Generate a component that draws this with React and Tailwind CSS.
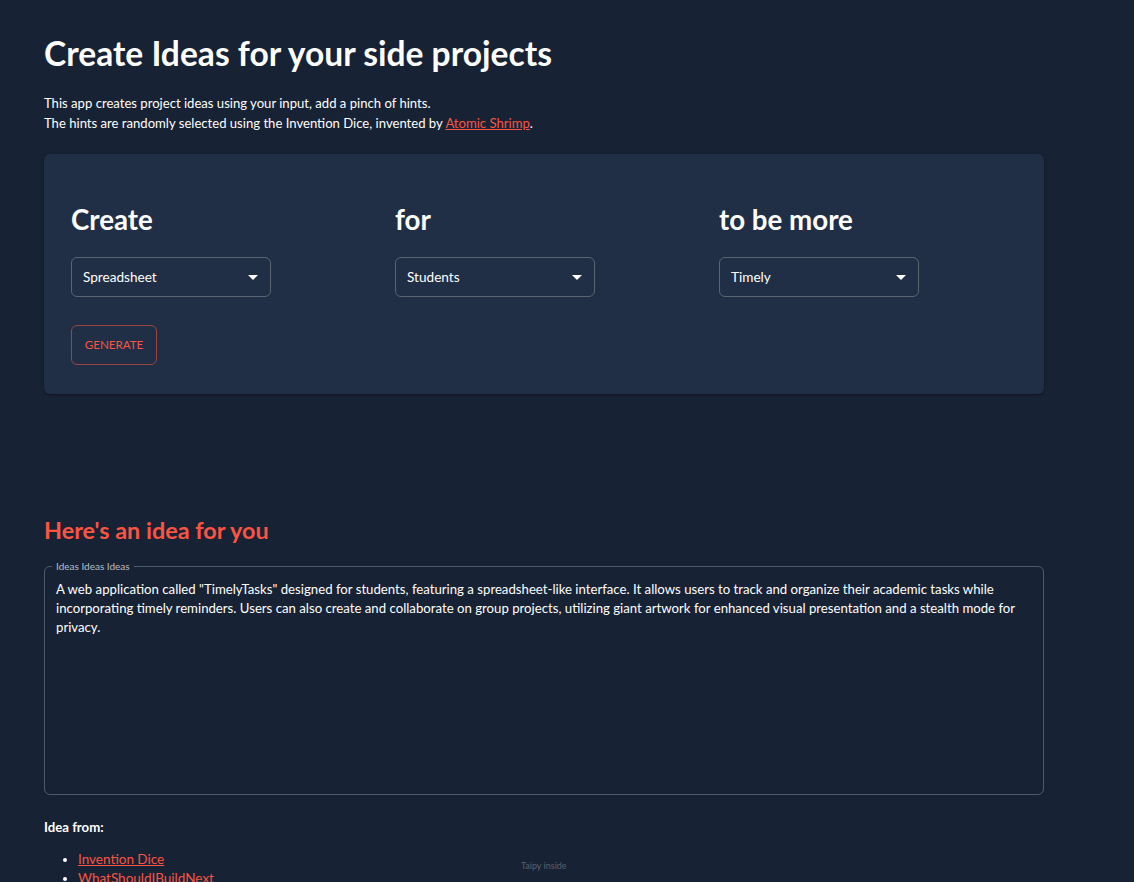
import React from "react";

const Select = ({ value }) => (
  <div className="flex items-center justify-between w-[200px] h-[40px] px-[11px] border border-[#5b6473] rounded-[6px] text-[13.6px] text-white">
    <span>{value}</span>
    <svg width="10" height="5" viewBox="0 0 10 5" className="mr-[1px]">
      <path d="M0 0 L10 0 L5 5 Z" fill="#ffffff" />
    </svg>
  </div>
);

const Column = ({ title, value }) => (
  <div>
    <h2 className="text-[27.7px] font-bold leading-[32px] text-white">{title}</h2>
    <div className="mt-[21px]">
      <Select value={value} />
    </div>
  </div>
);

export default function App() {
  return (
    <div
      className="min-h-screen bg-[#172235] text-white"
      style={{ fontFamily: "Lato, 'Open Sans', sans-serif" }}
    >
      <div className="w-[1000px] ml-[44px] pt-[32px] relative">
        <h1 className="text-[33.6px] font-bold leading-[42px]">
          Create Ideas for your side projects
        </h1>
        <p className="mt-[19px] text-[13.1px] leading-[20px]">
          This app creates project ideas using your input, add a pinch of hints.
          <br />
          The hints are randomly selected using the Invention Dice, invented by{" "}
          <a href="#" className="text-[#fb5442] underline">
            Atomic Shrimp
          </a>
          .
        </p>

        <div className="mt-[21px] h-[240px] bg-[#202f46] rounded-[6px] pl-[27px] pt-[50px] shadow-[0_1px_3px_rgba(0,0,0,0.4)]">
          <div className="grid grid-cols-3 w-[972px]">
            <Column title="Create" value="Spreadsheet" />
            <Column title="for" value="Students" />
            <Column title="to be more" value="Timely" />
          </div>
          <button className="mt-[28px] w-[86px] h-[40px] border border-[#9c4540] rounded-[6px] text-[11.6px] text-[#fb5442] uppercase">
            Generate
          </button>
        </div>

        <h2 className="mt-[121px] text-[23.4px] font-bold leading-[30px] text-[#fb5442]">
          Here's an idea for you
        </h2>

        <fieldset className="mt-[15px] h-[235px] border border-[#4f5a6a] rounded-[6px] pl-[11px] pr-[14px] pb-[6px]">
          <legend className="ml-[-4px] px-[4px] text-[10px] leading-[12px] text-[#b9bec7]">
            Ideas Ideas Ideas
          </legend>
          <p className="mt-[8px] text-[13.2px] leading-[19px]">
            A web application called "TimelyTasks" designed for students, featuring a spreadsheet-like interface. It allows users to track and organize their academic tasks while incorporating timely reminders. Users can also create and collaborate on group projects, utilizing giant artwork for enhanced visual presentation and a stealth mode for privacy.
          </p>
        </fieldset>

        <p className="mt-[22px] text-[13.2px] font-bold leading-[20px]">Idea from:</p>
        <ul className="mt-[13px] list-disc pl-[34px] text-[13.5px] leading-[19px] marker:text-white">
          <li>
            <a href="#" className="text-[#fb5442] underline">Invention Dice</a>
          </li>
          <li>
            <a href="#" className="text-[#fb5442] underline">WhatShouldIBuildNext</a>
          </li>
        </ul>

        <div className="absolute left-[477px] top-[859px] text-[9px] text-[#59616e]">
          Taipy inside
        </div>
      </div>
    </div>
  );
}
